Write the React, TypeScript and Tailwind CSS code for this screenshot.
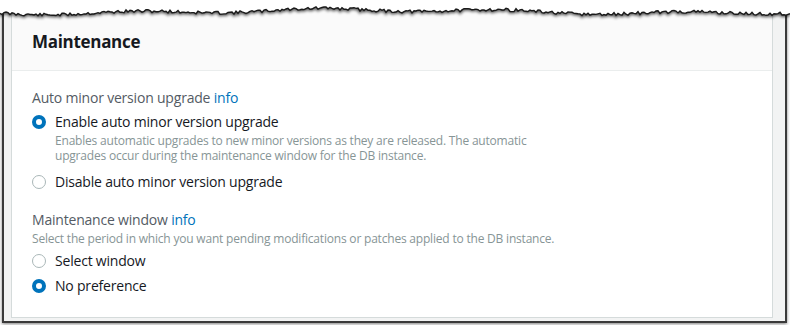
import React from "react";

function tornPath(): { fill: string; line: string } {
  const pts: [number, number][] = [];
  let seed = 11;
  const rnd = () => {
    seed = (seed * 9301 + 49297) % 233280;
    return seed / 233280;
  };
  for (let x = 0; x <= 790; x += 2) {
    const base = 11.5 + Math.sin(x / 29) * 1.6 + Math.sin(x / 97 + 1) * 1.8;
    const y = base + (rnd() - 0.5) * 3.2;
    pts.push([x, Math.round(y * 10) / 10]);
  }
  const line = pts.map((p, i) => `${i === 0 ? "M" : "L"}${p[0]} ${p[1]}`).join(" ");
  const fill = `M0 0 L790 0 L790 ${pts[pts.length - 1][1]} ` + pts.slice().reverse().map((p) => `L${p[0]} ${p[1]}`).join(" ") + " Z";
  return { fill, line };
}

const Radio = ({ checked }: { checked: boolean }) =>
  checked ? (
    <span className="inline-block w-[14px] h-[14px] rounded-full border-[4px] border-[#0073bb] bg-white shrink-0" />
  ) : (
    <span className="inline-block w-[14px] h-[14px] rounded-full border border-[#aab7b8] bg-white shrink-0" />
  );

export default function App() {
  const { fill, line } = tornPath();
  return (
    <div className="relative w-[790px] h-[325px] bg-white overflow-hidden" style={{ fontFamily: '"Open Sans", Arial, sans-serif' }}>
      <div className="ml-[2px] mr-[3px] h-[323px] border-l-2 border-r-2 border-b-2 border-[#3a3a3a] bg-[#f2f3f3] pl-[7px] pr-[12px] pt-[6px] pb-[3px] shadow-[0_1px_3px_rgba(0,0,0,0.5)]">
        <div className="h-full border border-[#d5dbdb] bg-white flex flex-col">
          <div className="h-[64px] bg-[#fafafa] border-b border-[#eaeded] px-[20px] flex items-center pt-[5px]">
            <h2 className="text-[17px] font-bold tracking-[-0.3px] text-[#16191f] leading-none">Maintenance</h2>
          </div>
          <div className="px-[20px] pt-[17px] tracking-[-0.2px]">
            <div className="text-[14px] text-[#545b64] leading-[20px]">
              Auto minor version upgrade <span className="text-[#0073bb]">info</span>
            </div>
            <div className="mt-[4px] flex flex-col">
              <div className="flex items-start">
                <div className="h-[20px] flex items-center"><Radio checked /></div>
                <div className="ml-[9px]">
                  <div className="text-[14px] text-[#16191f] leading-[20px]">Enable auto minor version upgrade</div>
                  <div className="text-[12px] text-[#879596] leading-[15px] mt-[1px] w-[490px]">
                    Enables automatic upgrades to new minor versions as they are released. The automatic upgrades occur during the maintenance window for the DB instance.
                  </div>
                </div>
              </div>
              <div className="flex items-center mt-[9px]">
                <Radio checked={false} />
                <div className="ml-[9px] text-[14px] text-[#16191f] leading-[20px]">Disable auto minor version upgrade</div>
              </div>
            </div>
            <div className="mt-[18px] text-[14px] text-[#545b64] leading-[20px]">
              Maintenance window <span className="text-[#0073bb]">info</span>
            </div>
            <div className="text-[12px] text-[#879596] leading-[15px] mt-[1px]">
              Select the period in which you want pending modifications or patches applied to the DB instance.
            </div>
            <div className="flex items-center mt-[5px]">
              <Radio checked={false} />
              <div className="ml-[9px] text-[14px] text-[#16191f] leading-[20px]">Select window</div>
            </div>
            <div className="flex items-center mt-[5px]">
              <Radio checked />
              <div className="ml-[9px] text-[14px] text-[#16191f] leading-[20px]">No preference</div>
            </div>
          </div>
        </div>
      </div>
      <svg className="absolute top-0 left-0" width="790" height="26" viewBox="0 0 790 26">
        <defs>
          <filter id="sh" x="-5%" y="-50%" width="110%" height="200%">
            <feGaussianBlur stdDeviation="1.8" />
          </filter>
        </defs>
        <path d={line} fill="none" stroke="#000" strokeOpacity="0.65" strokeWidth="4" filter="url(#sh)" />
        <path d={fill} fill="#ffffff" />
        <path d={line} fill="none" stroke="#1a1a1a" strokeWidth="1.4" />
      </svg>
    </div>
  );
}
